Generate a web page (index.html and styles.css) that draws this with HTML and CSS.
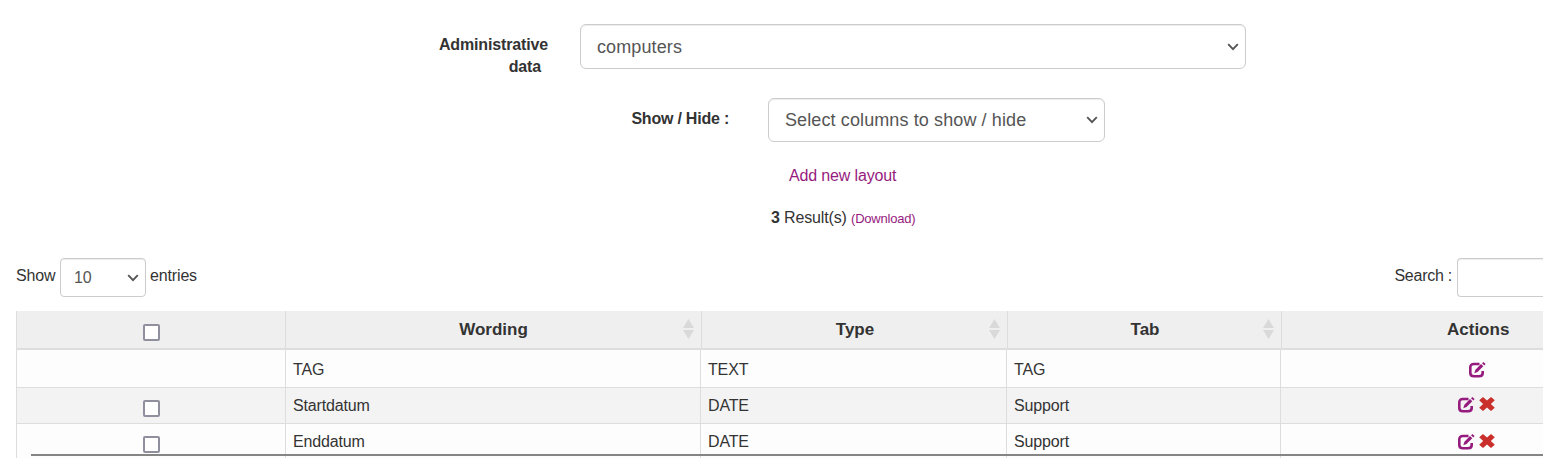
FILE: index.html
```html
<!DOCTYPE html>
<html lang="en">
<head>
<meta charset="utf-8">
<title>Administrative data</title>
<link rel="stylesheet" href="styles.css">
</head>
<body>
<svg class="defs" width="0" height="0">
  <symbol id="chevron" viewBox="0 0 12 8"><path d="M1.2 1.2 6 6.2 10.8 1.2" fill="none" stroke="currentColor" stroke-width="1.9"/></symbol>
  <symbol id="sort" viewBox="0 0 11 20"><path d="M5.5 0 11 9H0zM5.5 20 11 11H0z" fill="currentColor"/></symbol>
  <symbol id="edit" viewBox="0 0 17 16"><path d="M10.5 2H5Q1.3 2 1.3 5.5V11Q1.3 14.3 5 14.3H10Q13.7 14.3 13.7 11V9" fill="none" stroke="currentColor" stroke-width="2.6"/><path d="M12 2 14.3 4.2 8.5 9.9 5.3 11.2 6.4 7.7zM13 1.2 14.4 0 16.6 2 15.3 3.4z" fill="currentColor"/></symbol>
  <symbol id="remove" viewBox="0 0 16 14"><path d="M4 0 8 3.6 12 0 15.8 3.2 11.9 7 15.8 10.8 12 14 8 10.4 4 14 .2 10.8 4.1 7 .2 3.2z" fill="currentColor"/></symbol>
</svg>
<main class="page">
  <div class="form-row data-row">
    <label class="label data-label"><span>Administrative</span><span class="second">data</span></label>
    <div class="select large wide"><span>computers</span><svg class="chevron"><use href="#chevron"/></svg></div>
  </div>
  <div class="form-row columns-row">
    <label class="label columns-label">Show / Hide :</label>
    <div class="select large medium"><span>Select columns to show / hide</span><svg class="chevron"><use href="#chevron"/></svg></div>
  </div>
  <a class="link add">Add new layout</a>
  <div class="results"><b>3</b> Result(s) <a class="link small">(Download)</a></div>
  <div class="toolbar">
    <div class="group"><span class="show">Show</span><div class="select compact"><span>10</span><svg class="chevron"><use href="#chevron"/></svg></div><span>entries</span></div>
    <div class="group search"><span>Search :</span><input class="input" type="text" aria-label="Search"></div>
  </div>
  <div class="table">
    <div class="row head">
      <div class="cell check"><input type="checkbox" class="box" aria-label="All"></div>
      <div class="cell wording"><span>Wording</span><svg class="sort"><use href="#sort"/></svg></div>
      <div class="cell"><span>Type</span><svg class="sort"><use href="#sort"/></svg></div>
      <div class="cell"><span>Tab</span><svg class="sort"><use href="#sort"/></svg></div>
      <div class="cell last"><span>Actions</span></div>
    </div>
    <div class="row first">
      <div class="cell check"></div><div class="cell">TAG</div><div class="cell">TEXT</div><div class="cell">TAG</div>
      <div class="cell actions"><svg class="edit"><use href="#edit"/></svg></div>
    </div>
    <div class="row alt">
      <div class="cell check"><input type="checkbox" class="box" aria-label="Startdatum"></div><div class="cell">Startdatum</div><div class="cell">DATE</div><div class="cell">Support</div>
      <div class="cell actions"><svg class="edit"><use href="#edit"/></svg><svg class="remove"><use href="#remove"/></svg></div>
    </div>
    <div class="row third">
      <div class="cell check"><input type="checkbox" class="box" aria-label="Enddatum"></div><div class="cell">Enddatum</div><div class="cell">DATE</div><div class="cell">Support</div>
      <div class="cell actions"><svg class="edit"><use href="#edit"/></svg><svg class="remove"><use href="#remove"/></svg></div>
    </div>
    <div class="scrollbar"></div>
  </div>
</main>
</body>
</html>
```
FILE: styles.css
```css
* { box-sizing: border-box; }
body { margin: 0; overflow: hidden; background: #fff; color: #333; font: 16px/22px "Liberation Sans", Arial, sans-serif; letter-spacing: -.15px; }
.defs { position: absolute; }
.page { display: flex; flex-direction: column; width: 1543px; height: 458px; padding-top: 24px; overflow: hidden; }
.page > * { flex-shrink: 0; }
.form-row { display: flex; align-items: flex-start; }
.data-row { height: 74px; }
.columns-row { height: 67px; }
.label { font-weight: bold; text-align: right; white-space: nowrap; }
.data-label { display: flex; flex-direction: column; width: 548px; margin-right: 32px; padding-top: 10px; }
.second { padding-right: 7px; }
.columns-label { width: 729px; margin-right: 39px; padding-top: 10px; letter-spacing: -.22px; }
.select { display: flex; align-items: center; justify-content: space-between; border: 1px solid #ccc; border-radius: 6px; color: #555; background: #fff; box-shadow: inset 0 1px 1px rgba(0,0,0,.075); white-space: nowrap; }
.large { padding: 0 6px 0 16px; font-size: 18px; letter-spacing: .11px; }
.wide { width: 666px; height: 45px; }
.medium { width: 337px; height: 44px; }
.compact { width: 86px; height: 39px; margin: 0 4px 0 5px; padding: 0 6px 0 13px; border-radius: 4px; }
.chevron { width: 12px; height: 8px; }
.link { color: #961b7e; }
.add { margin-left: 789px; height: 42px; }
.results { margin-left: 771px; height: 51px; white-space: nowrap; }
.small { font-size: 13px; letter-spacing: -.2px; }
.toolbar { display: flex; justify-content: space-between; height: 53px; padding-left: 16px; }
.group { display: flex; align-items: flex-start; }
.group > span { padding-top: 7px; }
.group > .show { width: 39px; }
.search { letter-spacing: -.25px; }
.input { width: 86px; height: 39px; margin-left: 5px; border: 1px solid #ccc; border-right: 0; border-radius: 4px 0 0 4px; box-shadow: inset 0 1px 1px rgba(0,0,0,.075); }
.table { position: relative; display: flex; flex-direction: column; width: 1527px; margin-left: 16px; border-left: 1px solid #ddd; }
.row { display: grid; grid-template-columns: 269px 415px 306px 274px 262px; height: 36px; border-bottom: 1px solid #ddd; background: #fdfdfd; }
.row.head { grid-template-columns: 269px 416px 306px 274px 261px; height: 39px; border-bottom: 2px solid #ddd; background: #efefef; font-size: 17px; font-weight: bold; letter-spacing: 0; }
.row.first { height: 38px; }
.row.alt { background: #f3f3f3; }
.cell { padding: 7px 6px 0 7px; border-right: 1px solid #ddd; }
.cell:last-child { border-right: 0; }
.first .cell { padding-top: 9px; }
.head .cell { display: grid; grid-template-columns: 1fr 11px; padding: 8px 7px 0 19px; text-align: center; }
.head .cell.wording { padding-left: 18px; }
.head .cell.last { display: block; padding: 8px 0 0 165px; text-align: left; }
.sort { width: 11px; height: 20px; color: #d9d9d9; }
.cell.check { display: flex; justify-content: center; padding: 12px 0 0 1px; }
.head .cell.check { display: flex; justify-content: center; padding: 13px 0 0 1px; }
.box { appearance: none; width: 17px; height: 17px; margin: 0; border: 2px solid #8f8f9d; border-radius: 2px; background: #fff; }
.cell.actions { display: flex; gap: 4px; padding: 9px 0 0 177px; }
.first .cell.actions { padding: 12px 0 0 188px; }
.edit { width: 17px; height: 16px; color: #961b7e; }
.third .cell.actions { padding-top: 10px; }
.remove { width: 16px; height: 14px; color: #c9302c; }
.scrollbar { position: absolute; left: 14px; right: 0; top: 143px; height: 2px; background: #858585; }
```
